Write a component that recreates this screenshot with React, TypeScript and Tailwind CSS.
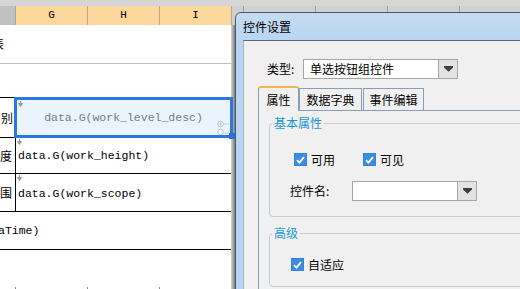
import React from 'react';

const cjk = "font-['Noto_Sans_CJK_SC',sans-serif]";
const mono = "font-['Liberation_Mono',monospace]";

const Marker = () => (
  <svg className="absolute left-[1px] top-[1px]" width="5" height="6" viewBox="0 0 5 6">
    <path d="M2.5 0V3M0.5 2.5H4.5L2.5 5.5Z" stroke="#9a9a9a" strokeWidth="1" fill="#9a9a9a" />
  </svg>
);

const Check: React.FC = () => (
  <span className="w-[13px] h-[13px] shrink-0 bg-[#3b8ce3] border border-[#3484dc] flex items-center justify-center">
    <svg width="9" height="8" viewBox="0 0 9 8">
      <path d="M1 4.2L3.4 6.6L8 1.2" stroke="white" strokeWidth="1.8" fill="none" />
    </svg>
  </span>
);

const Arrow: React.FC = () => (
  <div className="w-[19px] h-full bg-[#e3e3e3] border-l border-[#a6a6a6] flex items-center justify-center">
    <svg width="9" height="6" viewBox="0 0 9 6">
      <path d="M0 0H9V1.4L4.5 5.8L0 1.4Z" fill="#3f3f3f" />
    </svg>
  </div>
);

const Tab: React.FC<{ label: string; className: string }> = ({ label, className }) => (
  <div className={`bg-[#f0f0f0] border-x border-t border-[#8b9db6] flex items-center justify-center text-[12px] leading-[14px] ${className}`}>
    {label}
  </div>
);

export default function App() {
  return (
    <div className={`relative w-[520px] h-[289px] overflow-hidden bg-white text-black ${cjk}`}>
      {/* sheet */}
      <div className="h-[6px] bg-[#d6d6d6]" />
      <div className={`h-[19px] flex bg-[#d0d0d0] text-[11px] ${mono}`}>
        <div className="w-[16px] bg-[#c1c1c1] border-r border-[#a8a8a8]" />
        {['G', 'H', 'I'].map((c) => (
          <div key={c} className="w-[72px] bg-[#fdd89c] border-r border-[#bba98a] flex items-center justify-center">
            {c}
          </div>
        ))}
        <div className="w-[12px] border-r border-[#a3a3a3]" />
        <div className="w-[72px] border-r border-[#a3a3a3]" />
        <div className="w-[72px] border-r border-[#a3a3a3]" />
        <div className="w-[72px] border-r border-[#a3a3a3]" />
      </div>

      <div className="flex">
        <div className={`w-[231px] flex flex-col text-[11.5px] ${mono}`}>
          <div className="h-[39px] border-b border-[#c0c0c0] flex items-center overflow-hidden">
            <span className={`-ml-[8px] text-[12px] ${cjk}`}>表</span>
          </div>
          <div className="h-[34px] border-b border-black" />
          <div className="relative h-[40px] border-b border-black flex">
            <div className={`w-[15px] flex items-center justify-end pr-[2px] overflow-hidden whitespace-nowrap text-[12px] ${cjk}`}>
              别
            </div>
            <div className="absolute -top-[1px] left-[14px] w-[219px] h-[41px] border-[3px] border-[#2b78e4] bg-[#ebf3fd] flex items-center justify-center text-[#7c7c7c]">
              <Marker />
              data.G(work_level_desc)
              <svg className="absolute left-[200px] top-[20px]" width="14" height="15" viewBox="0 0 14 15">
                <circle cx="3.5" cy="4" r="2.8" stroke="#c2c6d0" fill="none" />
                <path d="M3.5 2.5V5.5M2 4H5M7 4H12M7 13H12" stroke="#c2c6d0" />
                <circle cx="3.5" cy="12" r="2.8" stroke="#c2c6d0" fill="none" />
              </svg>
              <div className="absolute left-[212px] top-[33px] w-[6px] h-[6px] bg-[#2e6fcf]" />
            </div>
          </div>
          <div className="h-[36px] border-b border-black flex">
            <div className={`w-[16px] border-r border-black flex items-center justify-end pr-[3px] overflow-hidden whitespace-nowrap text-[12px] ${cjk}`}>
              度
            </div>
            <div className="relative flex-1 flex items-center pl-[2px]">
              <Marker />
              data.G(work_height)
            </div>
          </div>
          <div className="h-[38px] border-b border-black flex">
            <div className={`w-[16px] border-r border-black flex items-center justify-end pr-[3px] overflow-hidden whitespace-nowrap text-[12px] ${cjk}`}>
              围
            </div>
            <div className="relative flex-1 flex items-center pl-[2px] pt-[2px]">
              <Marker />
              data.G(work_scope)
            </div>
          </div>
          <div className="h-[38px] border-b border-black flex items-center overflow-hidden">
            <span className="-ml-[2px]">aTime)</span>
          </div>
          <div className="h-[37px]" />
          <div className="h-[10px] flex">
            <div className="w-[16px] border-r border-[#8a8a8a]" />
            <div className="w-[72px] border-r border-[#8a8a8a]" />
            <div className="w-[72px] border-r border-[#8a8a8a]" />
          </div>
        </div>
        <div className="w-[4px] bg-gradient-to-r from-[#d6d6d6] to-[#7d7d7d]" />
      </div>

      {/* dialog window */}
      <div className="absolute left-[235px] top-[12px] w-[300px] h-[290px] rounded-tl-[6px] border border-[#4e5766] bg-[#bcd5ef] flex flex-col">
        <div className="h-[27px] pl-[7px] flex items-center text-[12px] bg-gradient-to-b from-[#c6dbf1] to-[#b9d5f1] rounded-tl-[6px]">
          控件设置
        </div>
        <div className="flex-1 ml-[7px] border-t border-l border-t-[#55677f] border-l-[#a2b6cc] bg-[#f0f0f0] flex flex-col text-[12px] leading-[14px]">
          <div className="mt-[18px] pl-[23px] h-[20px] flex items-center">
            <span className="w-[36px]">类型:</span>
            <div className="w-[155px] h-[20px] border border-[#a6a6a6] bg-white flex">
              <span className="flex-1 pl-[6px] flex items-center">单选按钮组控件</span>
              <Arrow />
            </div>
          </div>
          <div className="mt-[7px] ml-[14px] h-[24px] flex items-end">
            <div className="relative z-10 -mb-[1px] w-[41px] h-[25px] bg-[#f0f0f0] border-x border-[#8b9db6] border-t-2 border-t-[#efb54a] rounded-t-[3px] flex items-center justify-center">
              属性
            </div>
            <Tab label="数据字典" className="w-[63px] h-[22px]" />
            <Tab label="事件编辑" className="ml-[1px] w-[61px] h-[22px]" />
          </div>
          <div className="flex-1 ml-[14px] border-t border-l border-[#8b9db6]">
            <fieldset className="mt-[5px] ml-[10px] border border-[#cacaca] rounded-[4px] pb-[15px]">
              <legend className="ml-[2px] px-[2px] text-[#1a98d5]">基本属性</legend>
              <div className="mt-[23px] pl-[24px] h-[13px] flex items-center">
                <Check />
                <span className="ml-[4px] w-[24px]">可用</span>
                <span className="ml-[28px]">
                  <Check />
                </span>
                <span className="ml-[4px]">可见</span>
              </div>
              <div className="mt-[15px] pl-[20px] h-[20px] flex items-center">
                <span className="w-[62px]">控件名:</span>
                <div className="w-[125px] h-[20px] border border-[#a6a6a6] bg-white flex">
                  <span className="flex-1" />
                  <Arrow />
                </div>
              </div>
            </fieldset>
            <fieldset className="mt-[9px] ml-[10px] border border-[#cacaca] rounded-[4px] pb-[15px]">
              <legend className="ml-[2px] px-[2px] text-[#1a98d5]">高级</legend>
              <div className="mt-[18px] pl-[21px] h-[13px] flex items-center">
                <Check />
                <span className="ml-[4px]">自适应</span>
              </div>
            </fieldset>
          </div>
        </div>
      </div>
    </div>
  );
}
